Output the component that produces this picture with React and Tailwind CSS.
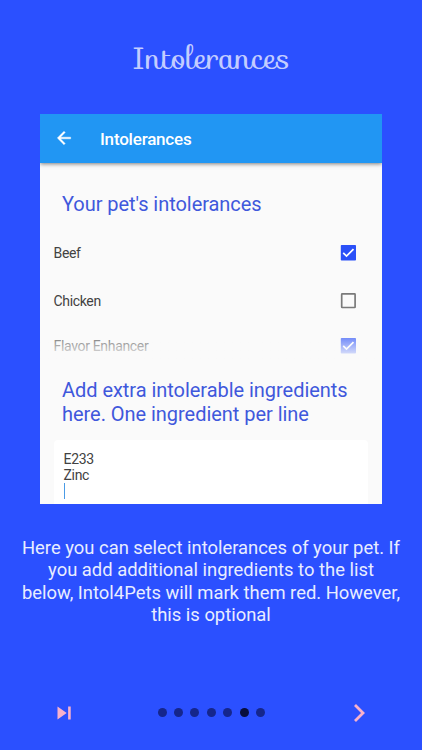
import React from 'react';

const INTOLERANCES = [
  { id: 'beef', label: 'Beef', checked: true },
  { id: 'chicken', label: 'Chicken', checked: false },
  { id: 'flavor', label: 'Flavor Enhancer', checked: true },
];

const PAGES = 7;
const CURRENT_PAGE = 5;

function Checkbox({ checked }) {
  return (
    <svg viewBox="0 0 20 20" className="h-5 w-5 shrink-0" aria-hidden="true">
      {checked ? (
        <>
          <rect x="2.8" y="2" width="15.2" height="15.5" rx="0.8" fill="#2a50f8" />
          <path d="M5.2 9.8l3.3 3.3 7-7" fill="none" stroke="#fff" strokeWidth="1.7" />
        </>
      ) : (
        <rect x="3.7" y="2.9" width="13.4" height="13.6" rx="0.5" fill="none" stroke="#7a7a7a" strokeWidth="1.7" />
      )}
    </svg>
  );
}

function PhonePreview() {
  return (
    <div className="mx-auto mt-9 h-[390px] w-[342px] shrink-0 overflow-hidden bg-[#fafafa]">
      <header className="relative flex h-[48.5px] items-center bg-[#2196f3] pl-[14px] text-white shadow-[0_1px_4px_rgba(0,0,0,0.5)]">
        <svg viewBox="0 0 24 24" className="h-5 w-5" fill="currentColor" stroke="currentColor" strokeWidth="0.5" aria-hidden="true">
          <path d="M20 11H7.83l5.59-5.59L12 4l-8 8 8 8 1.41-1.41L7.83 13H20v-2z" />
        </svg>
        <span className="ml-[26px] pt-[2px] text-[17px] font-medium tracking-[-0.2px]">Intolerances</span>
      </header>

      <h2 className="mt-[29.5px] pl-[22px] text-[20px] leading-6 tracking-[-0.05px] text-[#3f58dc]">Your pet's intolerances</h2>

      <div className="relative mt-[13px] h-[131px] overflow-hidden">
        <ul>
          {INTOLERANCES.map(item => (
            <li
              key={item.id}
              className="flex h-12 items-center justify-between pr-[24px] pl-[13.5px] text-[14px] tracking-[-0.33px] text-[#424242] last:h-[42px]"
            >
              <span>{item.label}</span>
              <Checkbox checked={item.checked} />
            </li>
          ))}
        </ul>
        {/* list fades out at the bottom edge */}
        <div className="absolute inset-x-0 bottom-0 h-[34px] bg-linear-to-b from-[#fafafa]/0 to-[#fafafa]" />
      </div>

      <h2 className="mt-[18px] pl-[22px] text-[20px] leading-6 tracking-[-0.04px] text-[#3f58dc]">
        Add extra intolerable ingredients
        <br />
        here. One ingredient per line
      </h2>

      <div className="mx-[14px] mt-[14px] h-20 rounded bg-white pt-[11px] pl-[9.5px] text-[14px] leading-4 tracking-[-0.3px] text-[#424242]">
        <p>E233</p>
        <p>Zinc</p>
        <div className="h-4 w-[1.5px] bg-[#4a9be6]" />
      </div>
    </div>
  );
}

export default function App() {
  return (
    <main className="flex h-[750px] w-[422px] flex-col overflow-hidden bg-[#2b50ff] font-['Roboto',sans-serif]">
      <h1 className="mt-[38px] h-10 text-center font-['Sofia',cursive] text-[30.6px] leading-10 text-[#c3cdff]">
        Intolerances
      </h1>

      <PhonePreview />

      <p className="mt-[33px] text-center text-[18.4px] leading-[22.3px] text-[#e8edff]">
        Here you can select intolerances of your pet. If
        <br />
        you add additional ingredients to the list
        <br />
        below, Intol4Pets will mark them red. However,
        <br />
        this is optional
      </p>

      <footer className="mt-[72.5px] flex h-7 items-center justify-between pr-[57px] pl-[50.5px] text-[#f8b1cb]">
        <button type="button" aria-label="Skip">
          <svg viewBox="0 0 24 24" className="h-[26px] w-[26px]" fill="currentColor" aria-hidden="true">
            <path d="M6 18l8.5-6L6 6v12zM15.8 6v12h2.4V6h-2.4z" />
          </svg>
        </button>
        <div className="-ml-[8px] flex gap-[7.4px]">
          {Array.from({ length: PAGES }, (_, i) => (
            <span
              key={i}
              className={i === CURRENT_PAGE ? 'h-[9px] w-[9px] rounded-full bg-[#080e3c]' : 'h-[9px] w-[9px] rounded-full bg-[#15268c]'}
            />
          ))}
        </div>
        <button type="button" aria-label="Next">
          <svg viewBox="0 0 11 18" className="h-[18px] w-[11px]" fill="none" stroke="currentColor" strokeWidth="2.8" aria-hidden="true">
            <path d="M1 1l8 8-8 8" />
          </svg>
        </button>
      </footer>
    </main>
  );
}
